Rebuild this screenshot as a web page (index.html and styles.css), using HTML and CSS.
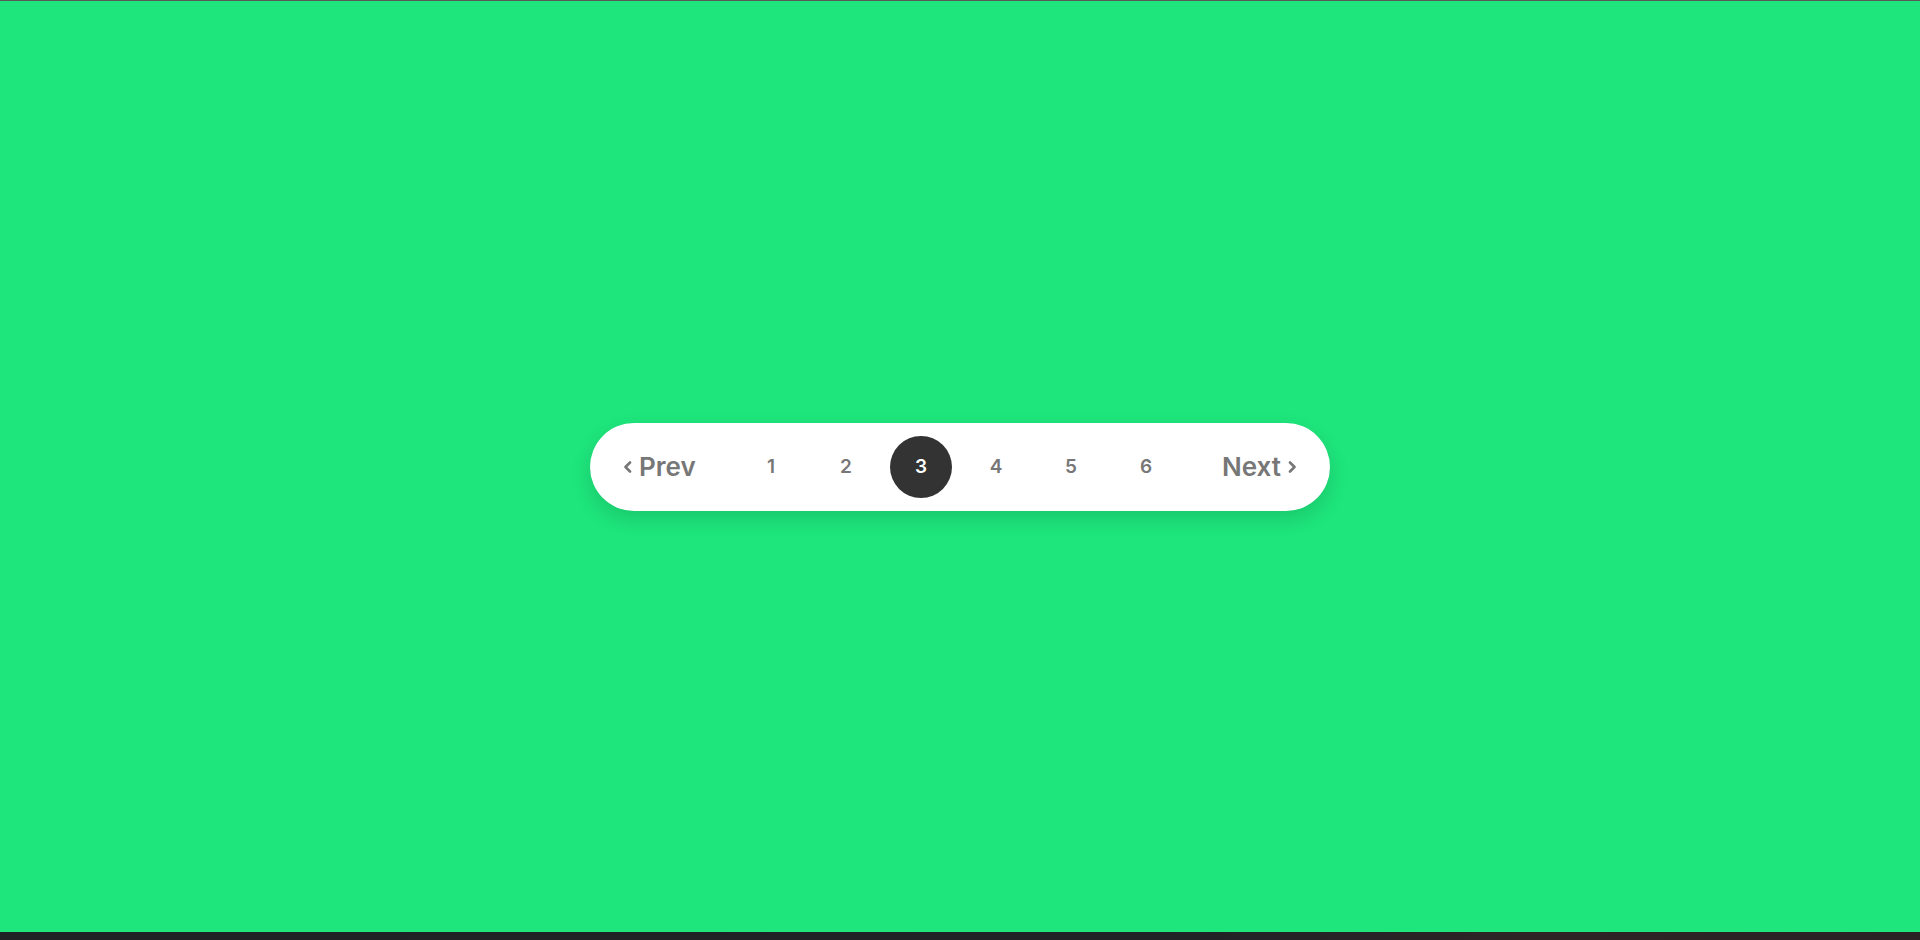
FILE: index.html
```html
<!DOCTYPE html>
<html lang="en">
<head>
<meta charset="utf-8">
<title>Pagination</title>
<link rel="stylesheet" href="styles.css">
</head>
<body>
<div class="topline"></div>
<main class="stage">
  <nav class="pager">
    <a class="nav-btn prev" href="#">
      <svg class="chev" viewBox="0 0 10 12" width="10" height="12"><path d="M7 1.5 L2.5 6 L7 10.5" fill="none" stroke="currentColor" stroke-width="2.6" stroke-linecap="round" stroke-linejoin="round"/></svg>
      <span>Prev</span>
    </a>
    <ul class="pages">
      <li><a class="page" href="#">1</a></li>
      <li><a class="page" href="#">2</a></li>
      <li><a class="page active" href="#">3</a></li>
      <li><a class="page" href="#">4</a></li>
      <li><a class="page" href="#">5</a></li>
      <li><a class="page" href="#">6</a></li>
    </ul>
    <a class="nav-btn next" href="#">
      <span>Next</span>
      <svg class="chev" viewBox="0 0 10 12" width="10" height="12"><path d="M3 1.5 L7.5 6 L3 10.5" fill="none" stroke="currentColor" stroke-width="2.6" stroke-linecap="round" stroke-linejoin="round"/></svg>
    </a>
  </nav>
</main>
<div class="taskbar"></div>
</body>
</html>
```

FILE: styles.css
```css
* { box-sizing: border-box; }

html, body {
  margin: 0;
  padding: 0;
  height: 100%;
}

body {
  display: flex;
  flex-direction: column;
  background: #1ee57c;
  font-family: "Inter", "Noto Sans", sans-serif;
  overflow: hidden;
}

.topline {
  height: 1px;
  background: #5a5a5a;
  flex: none;
}

.stage {
  flex: 1;
  display: flex;
  align-items: center;
  justify-content: center;
  background: #1ee57c;
}

.taskbar {
  height: 8px;
  flex: none;
  background: linear-gradient(90deg, #1f2124 0%, #202226 60%, #2e2426 80%, #2a2225 100%);
}

.pager {
  display: flex;
  align-items: center;
  height: 88px;
  width: 740px;
  padding: 0 33px;
  background: #ffffff;
  border-radius: 44px;
  box-shadow: 0 8px 20px rgba(0, 0, 0, 0.13);
}

.nav-btn {
  display: flex;
  align-items: center;
  gap: 6px;
  width: 74px;
  color: #777777;
  text-decoration: none;
  font-size: 26px;
  font-weight: 600;
  white-space: nowrap;
}

.prev { margin-right: 43px; }
.next { margin-left: auto; justify-content: flex-end; }

.chev { display: block; flex: none; }

.pages {
  display: flex;
  gap: 13px;
  list-style: none;
  margin: 0;
  padding: 0;
}

.page {
  display: flex;
  align-items: center;
  justify-content: center;
  width: 62px;
  height: 62px;
  border-radius: 50%;
  color: #777777;
  text-decoration: none;
  font-size: 19px;
  font-weight: 600;
}

.page.active {
  background: #333333;
  color: #ffffff;
}
```
